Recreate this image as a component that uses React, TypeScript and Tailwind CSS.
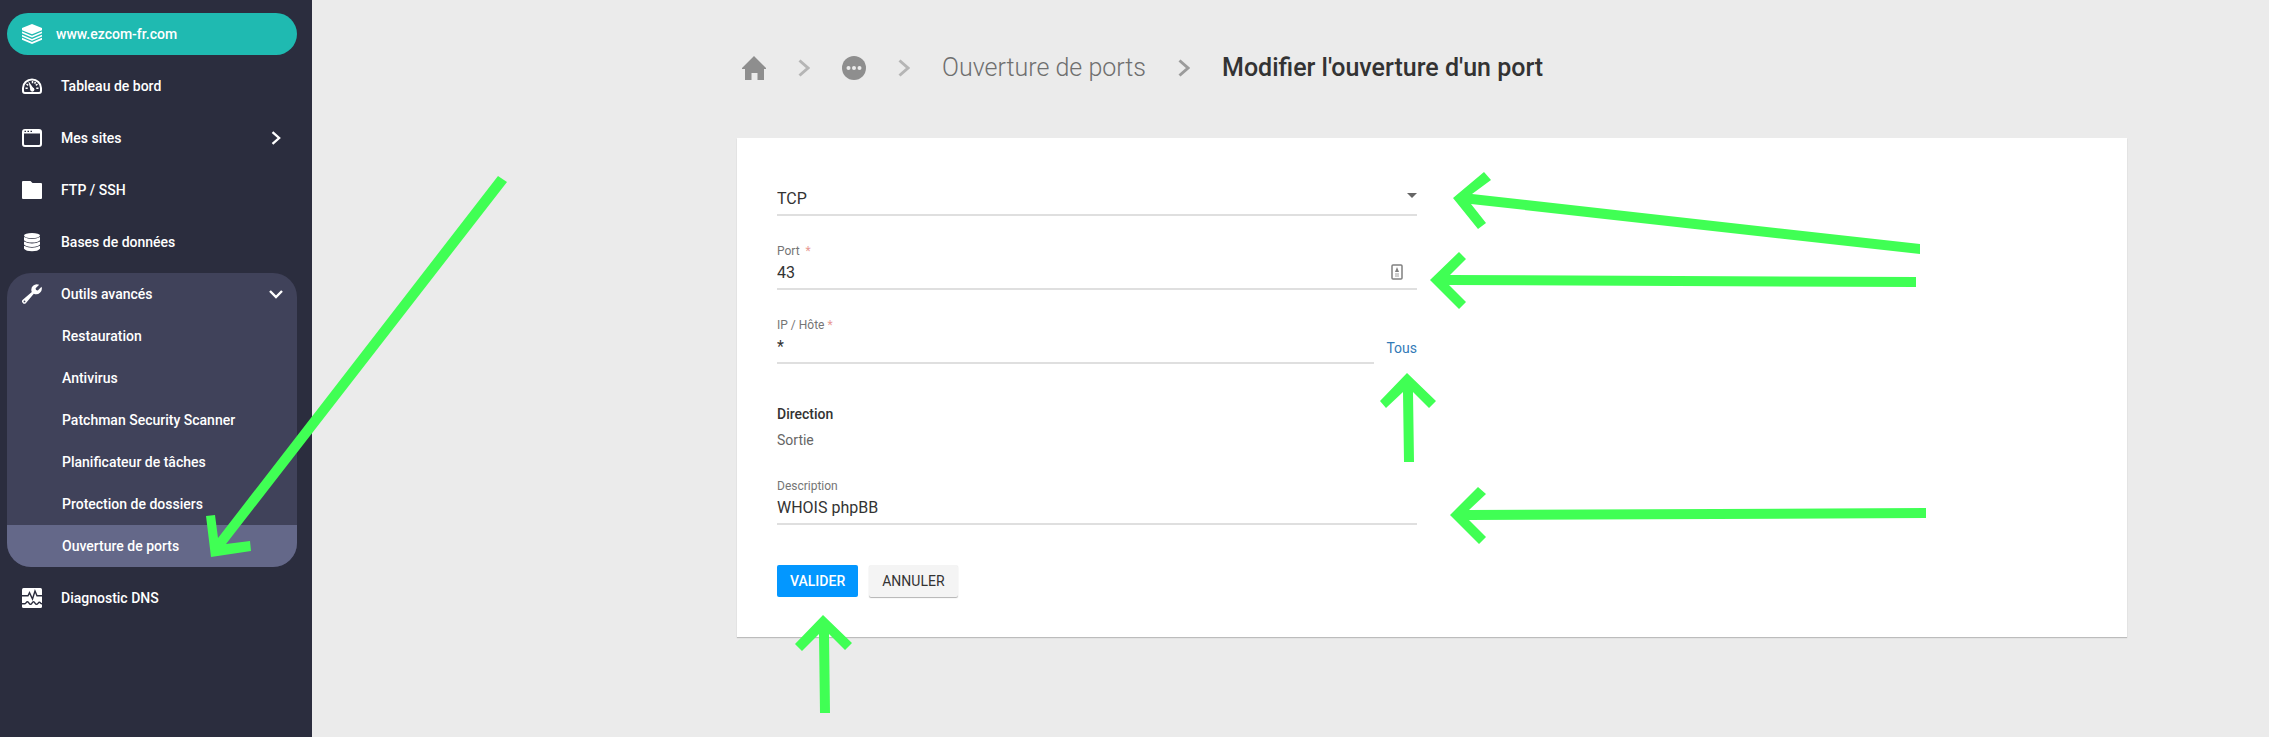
import { useState } from 'react';
import type { ReactNode } from 'react';

const icons: Record<string, ReactNode> = {
  layers: (
    <svg viewBox="0 0 20 20" className="size-5 shrink-0" fill="currentColor">
      <path d="M10 0 20 4v2.300L10 10.300 0 6.300V4z" />
      <path d="M0 7.600 10 11.800 20 7.600V9.300L10 13.500 0 9.300z" />
      <path d="M0 10.700 10 14.900 20 10.700V12.500L10 16.700 0 12.500z" />
      <path d="M0 13.800 10 18 20 13.800V15.800L10 20 0 15.800z" />
    </svg>
  ),
  dashboard: (
    <svg viewBox="0 0 20 20" className="size-5 shrink-0" fill="none" stroke="currentColor" strokeWidth="2">
      <path d="M3 17H17a2 2 0 0 0 2-2V12A9 8.500 0 0 0 1 12v3a2 2 0 0 0 2 2z" />
      <path d="M3.500 12.300h2.200M14.300 12.300h2.200M4.500 8l1.700 1.400M15.500 8l-1.700 1.400M10.500 5v2.200M13.500 5.800l-.9 1.800" strokeWidth="1.500" />
      <path d="M6.200 4.800 12.200 13.500h-3.800z" fill="currentColor" stroke="none" />
      <circle cx="10.300" cy="13.600" r="2.100" fill="currentColor" stroke="none" />
    </svg>
  ),
  window: (
    <svg viewBox="0 0 20 20" className="size-5 shrink-0" fill="none">
      <rect x="1" y="2" width="18" height="16" rx="2" stroke="currentColor" strokeWidth="2" />
      <path d="M1 2.500h18v3H1z" fill="currentColor" />
      <path d="M2.500 3.400h1.500M5.500 3.400H7M8.500 3.400H10" stroke="#2b2d3e" strokeWidth="1.200" />
    </svg>
  ),
  folder: (
    <svg viewBox="0 0 20 20" className="size-5 shrink-0" fill="currentColor">
      <path d="M1 1h7.500l2 2H19a1 1 0 0 1 1 1V18a1 1 0 0 1-1 1H1a1 1 0 0 1-1-1V2a1 1 0 0 1 1-1z" />
    </svg>
  ),
  database: (
    <svg viewBox="0 0 20 20" className="size-5 shrink-0" fill="currentColor">
      <ellipse cx="10" cy="3.600" rx="8" ry="2.600" />
      <path d="M2 5Q10 8.900 18 5V8.300Q16 10.600 10 10.600T2 8.300z" />
      <path d="M2 9.500Q10 13.400 18 9.500V12.600Q16 14.900 10 14.900T2 12.600z" />
      <path d="M2 13.800Q10 17.700 18 13.800V16.700Q16 19.200 10 19.200T2 16.700z" />
    </svg>
  ),
  wrench: (
    <svg viewBox="0 0 20 20" className="size-5 shrink-0">
      <path fill="currentColor" d="M17.200.7 13.600 4.300 14 6l1.800.5 3.700-3.700a5.600 5.600 0 0 1-7.700 6.900L4 18.900a2.200 2.200 0 0 1-3.200 0 2.200 2.200 0 0 1 0-3.200L9.800 8A5.600 5.600 0 0 1 17.200.7zM2.500 16.500a.9.9 0 1 0 0 1.800.9.9 0 0 0 0-1.800z" fillRule="evenodd" />
    </svg>
  ),
  pulse: (
    <svg viewBox="0 0 20 20" className="size-5 shrink-0" fill="none">
      <rect width="20" height="20" rx="1.500" fill="currentColor" />
      <path d="M0 7.700h6l1.500-3 3 6.300 2.500-8 2 4.700h5" stroke="#2b2d3e" strokeWidth="1.400" />
      <path d="M0 15.800h2.500c1.500 0 1.500-2 3-2s1.500 2.500 3 2.500 1.500-2.500 3-2.500 1.500 2.500 3 2.500 1.500-2 3-2c1 0 1 1.500 2.500 1.500" stroke="#2b2d3e" strokeWidth="1.400" />
    </svg>
  ),
};

const topLinks = [
  { label: 'Tableau de bord', icon: 'dashboard' },
  { label: 'Mes sites', icon: 'window', more: true },
  { label: 'FTP / SSH', icon: 'folder' },
  { label: 'Bases de données', icon: 'database' },
];

const toolLinks = [
  'Restauration',
  'Antivirus',
  'Patchman Security Scanner',
  'Planificateur de tâches',
  'Protection de dossiers',
];

const arrows = [
  '1453,198 1484,172 1491,180 1472,194 1920,244 1920,254 1471,204 1486,223 1478,229',
  '1430,280 1459,252 1466,259 1450,275 1916,277 1916,287 1449,285 1466,302 1459,309',
  '1407,373 1436,401 1429,408 1413,392 1414,462 1404,462 1403,392 1386,408 1380,401',
  '1450,515 1478,487 1486,494 1469,510 1926,508 1926,518 1469,520 1486,537 1479,544',
  '823,615 852,643 845,650 829,634 830,713 820,713 819,634 802,651 795,644',
  '211,557 206,516 215,515 218,538 498,176 507,182 226,544 250,541 251,551',
];

function Chevron({ className }: { className: string }) {
  return (
    <svg viewBox="0 0 12 18" className={className} fill="none" stroke="currentColor" strokeWidth="3">
      <path d="M1.500 1.500 10 9l-8.500 7.500" />
    </svg>
  );
}

function Sidebar() {
  return (
    <nav className="w-[312px] shrink-0 bg-[#2b2d3e] py-[13px] pr-[15px] pl-[7px] text-sm font-medium text-white">
      <a href="#" className="flex h-[42px] items-center gap-[14px] rounded-full bg-[#1fbab1] pl-[15px]">
        {icons.layers}
        www.ezcom-fr.com
      </a>
      <ul className="mt-[10px] flex flex-col gap-[10px]">
        {topLinks.map((link) => (
          <li key={link.label}>
            <a href="#" className="flex h-[42px] items-center gap-[19px] pr-[15px] pl-[15px]">
              {icons[link.icon]}
              <span className="flex-1">{link.label}</span>
              {link.more && <Chevron className="h-[14px] w-[12px]" />}
            </a>
          </li>
        ))}
        <li className="overflow-hidden rounded-3xl bg-[#40425a]">
          <button type="button" aria-expanded="true" className="flex h-[42px] w-full items-center gap-[19px] pr-[14px] pl-[15px] text-left">
            {icons.wrench}
            <span className="flex-1">Outils avancés</span>
            <svg viewBox="0 0 14 9" className="h-[9px] w-[14px]" fill="none" stroke="currentColor" strokeWidth="2.400">
              <path d="M1 1l6 6 6-6" />
            </svg>
          </button>
          <ul>
            {toolLinks.map((label) => (
              <li key={label}>
                <a href="#" className="flex h-[42px] items-center pl-[55px]">{label}</a>
              </li>
            ))}
            <li>
              <a href="#" aria-current="page" className="flex h-[42px] items-center bg-[#646889] pl-[55px]">
                Ouverture de ports
              </a>
            </li>
          </ul>
        </li>
        <li>
          <a href="#" className="flex h-[42px] items-center gap-[19px] pl-[15px]">
            {icons.pulse}
            Diagnostic DNS
          </a>
        </li>
      </ul>
    </nav>
  );
}

function Breadcrumb() {
  return (
    <div className="flex h-[136px] items-center gap-8 pl-[5px] text-[25px] text-[#8e8e8e]">
      <a href="#" aria-label="Accueil">
        <svg viewBox="0 0 24 24" className="size-6" fill="currentColor">
          <path d="M12 0 24 12v1h-2v11h-6.500v-7h-6v7H3V13H0v-1z" />
        </svg>
      </a>
      <Chevron className="h-[18px] w-3 shrink-0 text-[#b5b5b5]" />
      <button type="button" aria-label="Plus">
        <svg viewBox="0 0 24 24" className="size-6">
          <circle cx="12" cy="12" r="12" fill="currentColor" />
          <g fill="#ebebeb">
            <circle cx="6.500" cy="12" r="2" />
            <circle cx="12" cy="12" r="2" />
            <circle cx="17.500" cy="12" r="2" />
          </g>
        </svg>
      </button>
      <Chevron className="h-[18px] w-3 shrink-0 text-[#b5b5b5]" />
      <a href="#" className="font-light text-[#6f6f6f]">Ouverture de ports</a>
      <Chevron className="h-[18px] w-3 shrink-0 text-[#9b9b9b]" />
      <h1 className="font-medium text-[#333]">Modifier l'ouverture d'un port</h1>
    </div>
  );
}

export default function App() {
  const [form, setForm] = useState({
    protocol: 'TCP',
    port: '43',
    host: '*',
    description: 'WHOIS phpBB',
  });

  const update = (e: React.ChangeEvent<HTMLInputElement | HTMLSelectElement>) => {
    setForm((prev) => ({ ...prev, [e.target.name]: e.target.value }));
  };

  return (
    <div className="relative flex min-h-screen bg-[#ebebeb] font-[Roboto,sans-serif]">
      <Sidebar />
      <main className="min-w-0 flex-1 pr-[142px] pb-20 pl-[425px]">
        <Breadcrumb />
        <form
          onSubmit={(e) => e.preventDefault()}
          className="mt-[2px] bg-white p-10 shadow-[0_1px_1px_rgba(0,0,0,0.2)]"
        >
          <div className="flex w-[640px] max-w-full flex-col">
            <div className="relative">
              <select
                name="protocol"
                aria-label="Protocole"
                value={form.protocol}
                onChange={update}
                className="h-[38px] w-full appearance-none border-b-2 border-[#dfdfdf] pt-[6px] text-base text-[#333] outline-none"
              >
                <option>TCP</option>
                <option>UDP</option>
              </select>
              <svg viewBox="0 0 10 5" className="pointer-events-none absolute top-[15px] right-0 h-[5px] w-[10px]" fill="#666">
                <path d="M0 0h10L5 5z" />
              </svg>
            </div>

            <div className="relative mt-[27px]">
              <label htmlFor="port" className="block h-4 text-xs leading-4 text-[#757575]">
                Port &nbsp;<span className="text-[#e89a94]">*</span>
              </label>
              <input
                id="port"
                name="port"
                value={form.port}
                onChange={update}
                className="block h-[31px] w-full border-b-2 border-[#dfdfdf] pb-[2px] text-base text-[#333] outline-none"
              />
              <svg viewBox="0 0 12 16" className="pointer-events-none absolute top-[21px] right-[14px] h-4 w-3" fill="none">
                <rect x="1" y="1" width="10" height="14" rx="1" stroke="#808080" strokeWidth="1.500" />
                <path d="M6 3 8 8H4z" fill="#808080" />
                <path d="M4 10h4M4 12h4" stroke="#a0a0a0" />
              </svg>
            </div>

            <div className="mt-[27px] flex items-end gap-3">
              <div className="flex-1">
                <label htmlFor="host" className="block h-4 text-xs leading-4 text-[#757575]">
                  IP / Hôte <span className="text-[#e89a94]">*</span>
                </label>
                <input
                  id="host"
                  name="host"
                  value={form.host}
                  onChange={update}
                  className="block h-[31px] w-full border-b-2 border-[#dfdfdf] pb-[2px] text-base text-[#333] outline-none"
                />
              </div>
              <button
                type="button"
                onClick={() => setForm((prev) => ({ ...prev, host: '*' }))}
                className="h-[31px] pb-[2px] text-sm text-[#337ab7]"
              >
                Tous
              </button>
            </div>

            <dl className="mt-[37px] text-sm leading-[26px]">
              <dt className="font-medium text-[#333]">Direction</dt>
              <dd className="text-[#666]">Sortie</dd>
            </dl>

            <div className="mt-[25px]">
              <label htmlFor="description" className="block h-4 text-xs leading-4 text-[#757575]">
                Description
              </label>
              <input
                id="description"
                name="description"
                value={form.description}
                onChange={update}
                className="block h-[31px] w-full border-b-2 border-[#dfdfdf] pb-[2px] text-base text-[#333] outline-none"
              />
            </div>

            <div className="mt-10 flex gap-[11px] text-sm">
              <button type="submit" className="h-8 rounded-xs bg-[#0397ff] px-[13px] font-medium text-white">
                VALIDER
              </button>
              <button type="button" className="h-8 rounded-xs bg-[#f4f4f4] px-[13px] text-[#333] shadow-[0_1px_1px_rgba(0,0,0,0.3)]">
                ANNULER
              </button>
            </div>
          </div>
        </form>
      </main>

      {/* annotation arrows */}
      <svg viewBox="0 0 2269 737" className="pointer-events-none absolute inset-0 size-full" fill="#40ff54" aria-hidden="true">
        {arrows.map((points) => (
          <polygon key={points} points={points} />
        ))}
      </svg>
    </div>
  );
}
